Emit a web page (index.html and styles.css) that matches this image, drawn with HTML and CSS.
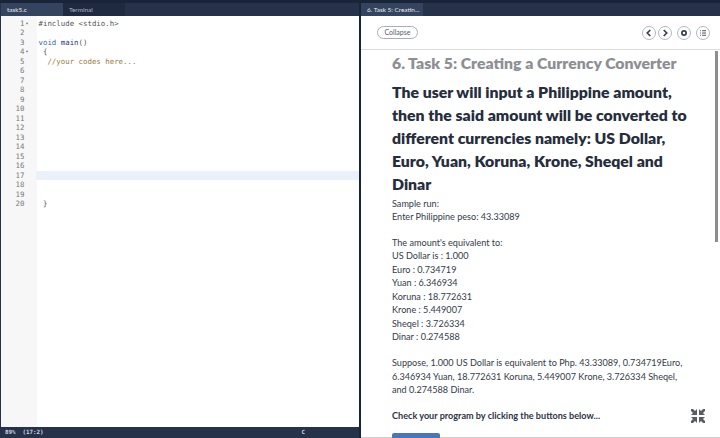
FILE: index.html
```html
<!DOCTYPE html>
<html lang="en">
<head>
<meta charset="utf-8">
<title>Task 5</title>
<link rel="stylesheet" href="styles.css">
</head>
<body>
<div class="app">
  <section class="editor">
    <div class="tabs">
      <div class="tab active">task5.c</div>
      <div class="tab">Terminal</div>
    </div>
    <div class="code">
      <div class="line"><span class="num">1<i class="fold">▾</i></span><span class="src">#include &lt;stdio.h&gt;</span></div>
      <div class="line"><span class="num">2</span><span class="src"></span></div>
      <div class="line"><span class="num">3</span><span class="src"><span class="kw">void</span> <span class="fn">main</span>()</span></div>
      <div class="line"><span class="num">4<i class="fold">▾</i></span><span class="src"> {</span></div>
      <div class="line"><span class="num">5</span><span class="src">  <span class="cm">//your codes here...</span></span></div>
      <div class="line"><span class="num">6</span><span class="src"></span></div>
      <div class="line"><span class="num">7</span><span class="src"></span></div>
      <div class="line"><span class="num">8</span><span class="src"></span></div>
      <div class="line"><span class="num">9</span><span class="src"></span></div>
      <div class="line"><span class="num">10</span><span class="src"></span></div>
      <div class="line"><span class="num">11</span><span class="src"></span></div>
      <div class="line"><span class="num">12</span><span class="src"></span></div>
      <div class="line"><span class="num">13</span><span class="src"></span></div>
      <div class="line"><span class="num">14</span><span class="src"></span></div>
      <div class="line"><span class="num">15</span><span class="src"></span></div>
      <div class="line"><span class="num">16</span><span class="src"></span></div>
      <div class="line current"><span class="num">17</span><span class="src"></span></div>
      <div class="line"><span class="num">18</span><span class="src"></span></div>
      <div class="line"><span class="num">19</span><span class="src"></span></div>
      <div class="line"><span class="num">20</span><span class="src"> }</span></div>
    </div>
    <div class="status"><span>89%  (17:2)</span><span class="lang">C</span></div>
  </section>
  <section class="guide">
    <div class="tabs">
      <div class="tab active wide">6. Task 5: Creatin...</div>
    </div>
    <div class="toolbar">
      <button class="collapse">Collapse</button>
      <div class="tools">
        <span class="tool"><svg viewBox="0 0 14 14"><path d="M8.500 3.500 5 7l3.500 3.500" class="dark"/></svg></span>
        <span class="tool"><svg viewBox="0 0 14 14"><path d="M5.500 3.500 9 7l-3.500 3.500" class="dark"/></svg></span>
        <span class="tool"><svg viewBox="0 0 14 14"><circle cx="7" cy="7" r="2.500" class="ring"/></svg></span>
        <span class="tool"><svg viewBox="0 0 14 14"><path d="M3.500 4.500h1M3.500 7h1M3.500 9.500h1M6 4.500h4.500M6 7h4.500M6 9.500h4.500" class="thin"/></svg></span>
      </div>
    </div>
    <div class="content">
      <h1>6. Task 5: Creating a Currency Converter</h1>
      <h2>The user will input a Philippine amount, then the said amount will be converted to different currencies namely: US Dollar, Euro, Yuan, Koruna, Krone, Sheqel and Dinar</h2>
      <p>Sample run:<br>Enter Philippine peso: 43.33089</p>
      <p>The amount's equivalent to:<br>US Dollar is : 1.000<br>Euro : 0.734719<br>Yuan : 6.346934<br>Koruna : 18.772631<br>Krone : 5.449007<br>Sheqel : 3.726334<br>Dinar : 0.274588</p>
      <p>Suppose, 1.000 US Dollar is equivalent to Php. 43.33089, 0.734719Euro, 6.346934 Yuan, 18.772631 Koruna, 5.449007 Krone, 3.726334 Sheqel, and 0.274588 Dinar.</p>
      <p class="check">Check your program by clicking the buttons below...</p>
      <div class="run"></div>
    </div>
    <div class="scrollbar"></div>
    <svg class="expand" viewBox="0 0 14 14"><path d="M0 0 2 0 4 2 6 0 6 6 0 6 2 4 0 2ZM14 0 12 0 10 2 8 0 8 6 14 6 12 4 14 2ZM0 14 2 14 4 12 6 14 6 8 0 8 2 10 0 12ZM14 14 12 14 10 12 8 14 8 8 14 8 12 10 14 12Z"/></svg>
  </section>
</div>
</body>
</html>
```

FILE: styles.css
```css
* { box-sizing: border-box; }
html, body { margin: 0; height: 100%; overflow: hidden; }
body { background: #1a2438; }
.app { display: flex; height: 438px; padding-top: 3px; gap: 2px; background: #1a2438; }
.editor, .guide { display: flex; flex-direction: column; position: relative; overflow: hidden; }
.editor { width: 359px; background: #fff; border-left: 1px solid #26324a; }
.guide { width: 359px; background: #fff; }
.guide::after { content: ""; position: absolute; left: 0; right: 0; bottom: 0; height: 1px; background: #cfcfd2; }
.tabs { display: flex; height: 13px; flex: none; background: #26324a; font: 6.400px/13px "Lato", sans-serif; color: #c9cfd9; }
.tab { width: 62px; padding-left: 6px; }
.tab:nth-child(2) { padding-left: 6px; color: #aab2c0; background: #1f2a40; }
.tab.active { background: #34445f; color: #e8ebf0; }
.tab.wide { width: 62px; padding-left: 6px; }
.code { flex: 1; padding-top: 2.500px; background: linear-gradient(to right, #f7f7f8 36px, #fff 36px); font: 7.400px/9.530px "DejaVu Sans Mono", monospace; color: #555; }
.line { display: flex; height: 9.530px; white-space: pre; }
.num { position: relative; width: 23.500px; text-align: right; color: #777; flex: none; }
.fold { position: absolute; left: 24.500px; top: 0; font-style: normal; font-size: 5px; color: #555; }
.src { flex: 1; margin-left: 14px; }
.line.current .src { background: #ebf1fb; margin-left: 11.500px; }
.kw { color: #3a6a9a; }
.fn { color: #2a3a80; }
.cm { color: #9a7a3c; }
.status { flex: none; height: 11px; display: flex; background: #26324a; color: #d5d9e0; font: bold 5.800px/11px "DejaVu Sans Mono", monospace; padding-left: 4px; white-space: pre; }
.lang { margin-left: 258px; }
.toolbar { flex: none; height: 34px; display: flex; align-items: center; justify-content: space-between; padding: 0 10px 0 16px; border-bottom: 1px solid #dcdcdf; }
.collapse { width: 41px; height: 13px; padding: 0; border: 1px solid #a9adb5; border-radius: 7px; background: #fff; color: #555b68; font: 7px/11px "Lato", sans-serif; }
.tools { display: flex; gap: 2px; }
.tools .tool:nth-child(2) { margin-right: 3px; }
.tools .tool:nth-child(3) { margin-right: 3px; }
.tool { width: 14px; height: 14px; border: 1px solid #b4b7bd; border-radius: 50%; display: flex; align-items: center; justify-content: center; }
.tool svg { width: 12px; height: 12px; fill: none; }
.dark { stroke: #3b4150; stroke-width: 2; }
.ring { stroke: #3b4150; stroke-width: 2; }
.thin { stroke: #4a5060; stroke-width: 1.200; }
.content { flex: 1; overflow: hidden; padding: 0 30px 0 31px; color: #333a48; font: 9.100px/13.550px "Lato", sans-serif; }
h1 { margin: 2px 0 7px; font: 800 15.800px/22px "Lato", sans-serif; color: #8d8f93; white-space: nowrap; }
h2 { margin: 0 0 1px; font: 800 15.800px/22.900px "Lato", sans-serif; color: #262d3d; }
p { margin: 0 0 12px; }
.check { font-weight: 700; margin-bottom: 11px; color: #2c3342; }
.run { position: relative; z-index: 1; width: 48px; height: 20px; background: #4a76b8; border-radius: 2px 2px 0 0; }
.scrollbar { position: absolute; right: 2px; top: 48px; width: 3px; height: 191px; background: #8d8d8d; }
.expand { position: absolute; left: 330px; top: 406px; width: 14px; height: 14px; fill: #5a5d63; }
```
